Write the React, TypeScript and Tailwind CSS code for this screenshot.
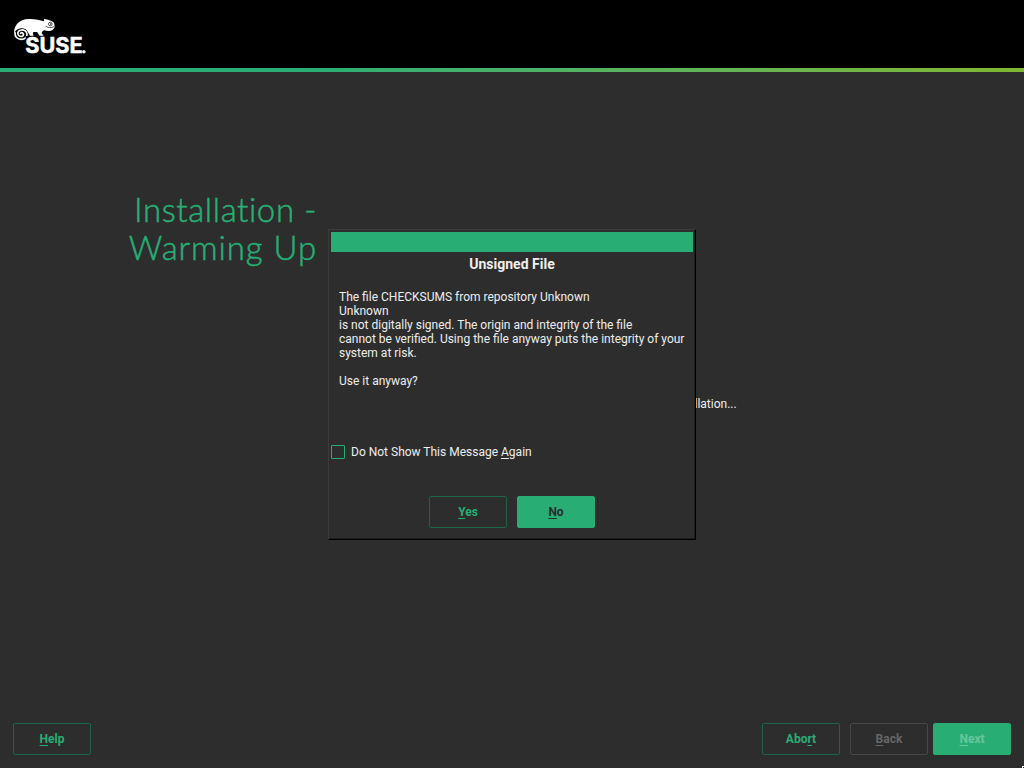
import React from "react";

function Key({ children }: { children: React.ReactNode }) {
  return <span className="underline decoration-1 underline-offset-2 [text-decoration-skip-ink:none]">{children}</span>;
}

function Button({ className, children }: { className: string; children: React.ReactNode }) {
  return (
    <button className={`flex h-8 w-[78px] items-center justify-center rounded-[2px] border text-xs leading-[14px] font-bold ${className}`}>
      <span>{children}</span>
    </button>
  );
}

const outline = "border-[#1a6647] text-[#28ae75]";

function Logo() {
  return (
    <svg className="ml-3 mt-3 h-12 w-[88px] overflow-visible" viewBox="36 36 264 144" fill="white">
      <path d="M42 97C43 74 60 57 86 57C104 56 119 61 132 64L132 57C145 59 158 63 162 69C165 78 165 85 158 90C151 94 141 93 133 91C128 93 125 96 125 100L131 107L119 107C115 104 114 98 111 96L101 96C97 98 99 102 101 107L90 107C86 103 84 92 76 87C62 81 42 90 42 104Z" />
      <path
        d="M45 98C44 110 52 118 64 118C75 118 82 111 81 102C80 93 72 89 64 90C56 91 52 97 54 103C56 109 63 111 68 108C72 105 71 100 67 98C65 97 63 98 62 100"
        fill="none"
        stroke="white"
        strokeWidth="5"
        strokeLinecap="round"
      />
      <circle cx="151" cy="72" r="5.5" fill="white" stroke="black" strokeWidth="2" />
      <circle cx="152" cy="72" r="2" fill="black" />
      <path d="M137 78C143 84 153 84 162 80" fill="none" stroke="black" strokeWidth="2" />
      <path d="M77 108H125V125H77Z" fill="black" />
      <g fontFamily="Inter, sans-serif" fontWeight="700" stroke="white" strokeWidth="1.5">
        <text x="76" y="157.5" fontSize="63" textLength="172" lengthAdjust="spacingAndGlyphs">SUSE</text>
        <text x="244" y="157.5" fontSize="46">.</text>
      </g>
    </svg>
  );
}

export default function App() {
  return (
    <div className="relative flex h-[768px] w-[1024px] flex-col overflow-hidden bg-[#2d2d2d] font-[Roboto,sans-serif] text-xs leading-[14px] text-[#eeeeee]">
      <header className="h-[68px] shrink-0 bg-black"><Logo /></header>
      <div className="h-1 shrink-0 bg-linear-to-r from-[#28ae75] from-30% to-[#7fb82f]" />
      <main className="flex flex-1">
        <h1 className="mt-[118px] w-[317px] text-right font-[Lato,sans-serif] text-[33px] leading-[38px] font-light text-[#28ae75] [-webkit-text-stroke:0.5px_#28ae75] [font-variant-ligatures:none]">
          <span className="block tracking-[0.6px]">Installation -</span>
          <span className="block tracking-[0.9px]">Warming Up</span>
        </h1>
        <p className="mt-[325px] ml-[377.5px]">llation...</p>
      </main>
      <footer className="flex h-[45px] shrink-0 items-start px-[13px]">
        <Button className={outline}><Key>H</Key>elp</Button>
        <div className="ml-auto flex">
          <Button className={outline}>Abo<Key>r</Key>t</Button>
          <Button className="ml-2.5 border-[#484848] text-[#666666]"><Key>B</Key>ack</Button>
          <Button className="ml-[5px] border-[#28ae75] bg-[#28ae75] text-[#6bc59c]"><Key>N</Key>ext</Button>
        </div>
      </footer>
      <section role="dialog" className="absolute top-[229px] left-[328px] flex h-[311px] w-[368px] flex-col border border-t-[#3b3b3b] border-r-black border-b-black border-l-[#3b3b3b] bg-[#2d2d2d] p-0.5 shadow-[inset_-1px_-1px_0_#1f1f1f]">
        <div className="h-5 shrink-0 bg-[#28ae75]" />
        <h2 className="mt-1 text-center text-sm leading-4 font-bold">Unsigned File</h2>
        <div className="mt-[18px] pl-2 whitespace-nowrap">
          <p>The file CHECKSUMS from repository Unknown</p>
          <p>Unknown</p>
          <p>is not digitally signed. The origin and integrity of the file</p>
          <p>cannot be verified. Using the file anyway puts the integrity of your</p>
          <p>system at risk.</p>
          <p className="mt-3.5">Use it anyway?</p>
        </div>
        <label className="mt-[57px] flex items-center gap-1.5">
          <span className="size-3.5 rounded-[1px] border border-[#28ae75]" />
          <span>Do Not Show This Message <Key>A</Key>gain</span>
        </label>
        <div className="mt-[37px] flex justify-center gap-2.5">
          <Button className={outline}><Key>Y</Key>es</Button>
          <Button className="border-[#28ae75] bg-[#28ae75] text-[#2d2d2d]"><Key>N</Key>o</Button>
        </div>
      </section>
      <svg className="absolute right-0 bottom-0 size-0.5" viewBox="0 0 2 2"><path d="M0 0H2V1H1V2H0Z" fill="white" /></svg>
    </div>
  );
}
